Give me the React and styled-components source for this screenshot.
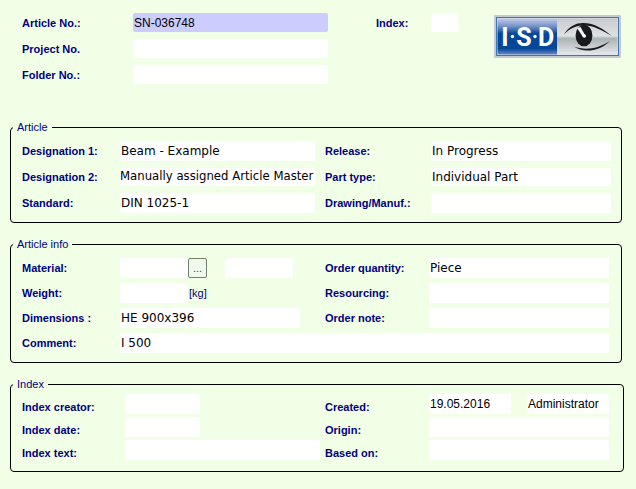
import React from 'react';
import styled, { createGlobalStyle } from 'styled-components';

const colors = {
  page: '#f0ffe6',
  label: '#000080',
  field: '#ffffff',
  key: '#ccccff',
  text: '#000000',
};

const fonts = {
  ui: '"Liberation Sans", Arial, sans-serif',
  value: '"DejaVu Sans", Verdana, sans-serif',
  condensed: '"DejaVu Sans Condensed", "DejaVu Sans", sans-serif',
};

const GlobalStyle = createGlobalStyle`
  *, *::before, *::after {
    box-sizing: border-box;
  }

  body {
    margin: 0;
    background: ${colors.page};
    font-family: ${fonts.ui};
    font-size: 11px;
    line-height: 13px;
    color: ${colors.label};
  }
`;

const Page = styled.form`
  display: flex;
  flex-direction: column;
  gap: 15px;
  padding: 13px 12px 17px 10px;
`;

const Header = styled.header`
  display: flex;
  align-items: flex-start;
  padding: 0 3px 0 12px;
  margin-bottom: 22px;
`;

const HeaderFields = styled.div`
  display: grid;
  grid-template-columns: 111px minmax(0, 195px);
  grid-auto-rows: 19px;
  row-gap: 7px;
  align-items: center;
`;

const IndexField = styled.div`
  display: flex;
  align-items: center;
  gap: 23px;
  height: 19px;
  margin-left: 48px;
`;

const Label = styled.label`
  font-weight: bold;
  white-space: nowrap;
`;

const HeaderLabel = styled(Label)`
  padding-top: 2px;
`;

const SideLabel = styled(Label)`
  padding-left: ${({ $indent }) => $indent || '10px'};
`;

const Input = styled.input`
  width: ${({ $width }) => $width || '100%'};
  min-width: 0;
  height: 100%;
  min-height: 18px;
  padding: 0 0 0 1px;
  border: 0;
  border-radius: 2px;
  background: ${({ $isKey }) => ($isKey ? colors.key : colors.field)};
  color: ${colors.text};
  font-family: ${fonts.value};
  font-size: 12px;

  &:focus {
    outline: 1px solid ${colors.label};
  }
`;

const PlainInput = styled(Input)`
  font-family: ${fonts.ui};
`;

const LongInput = styled(Input)`
  padding: 0 0 3px;
  font-family: ${fonts.condensed};
  font-size: 13px;
`;

const WideInput = styled(Input)`
  grid-column: 2 / -1;
`;

const Group = styled.fieldset`
  display: grid;
  grid-template-columns: ${({ $columns }) => $columns};
  grid-template-rows: ${({ $rows }) => $rows};
  row-gap: ${({ $gap }) => $gap};
  align-items: ${({ $align }) => $align || 'center'};
  min-width: 0;
  margin: ${({ $margin }) => $margin || '0 2px 0 0'};
  padding: ${({ $padding }) => $padding};
  border: 1px solid ${colors.text};
  border-radius: 4px;
`;

const Legend = styled.legend`
  margin-left: -9px;
  padding: 0 4px;
`;

const Cell = styled.div`
  display: flex;
  align-items: center;
  height: 100%;
`;

const SplitCell = styled(Cell)`
  justify-content: space-between;
  gap: 16px;
`;

const BrowseButton = styled.button`
  width: 19px;
  height: 20px;
  margin-right: 18px;
  padding: 0;
  border: 1px solid #70806c;
  border-radius: 2px;
  background: #f0f8ec;
  color: #444444;
  font-family: ${fonts.ui};
  font-size: 11px;
  line-height: 18px;
`;

const Unit = styled.span`
  padding-left: 1px;
`;

const LogoSvg = styled.svg`
  flex: none;
  width: 127px;
  height: 43px;
  margin: 2px 0 0 auto;
`;

const Logo = () => (
  <LogoSvg viewBox="0 0 127 43" role="img" aria-label="ISD">
    <defs>
      <linearGradient id="logoBlue" x1="0" y1="0" x2="0" y2="1">
        <stop offset="0" stopColor="#c3cbe6" />
        <stop offset="0.2" stopColor="#7c97cb" />
        <stop offset="0.42" stopColor="#07479a" />
        <stop offset="0.84" stopColor="#07479a" />
        <stop offset="1" stopColor="#6689c4" />
      </linearGradient>
      <linearGradient id="logoSilver" x1="0" y1="0" x2="0" y2="1">
        <stop offset="0" stopColor="#c8cbce" />
        <stop offset="0.48" stopColor="#dfe1e2" />
        <stop offset="0.56" stopColor="#adb2b5" />
        <stop offset="1" stopColor="#e6e8e9" />
      </linearGradient>
    </defs>
    <rect width="127" height="43" rx="1" fill="#c3cad0" />
    <rect x="2" y="2" width="123" height="39" fill="#3c78b5" />
    <rect x="3" y="3" width="121" height="37" fill="#d4e0ed" />
    <rect x="3.5" y="3.5" width="59.5" height="36" fill="url(#logoBlue)" />
    <rect x="63" y="3.5" width="60.5" height="36" fill="url(#logoSilver)" />
    <g
      fill="#ffffff"
      fontFamily="Roboto, sans-serif"
      fontSize="25"
      fontWeight="bold"
      textAnchor="middle"
    >
      <text x="11" y="31">I</text>
      <text x="30" y="31">S</text>
      <text x="52" y="31">D</text>
    </g>
    <circle cx="18.5" cy="21.5" r="1.7" fill="#ffffff" />
    <circle cx="41" cy="21.5" r="1.7" fill="#ffffff" />
    <path
      d="M69.5 20C75 11 82 8 89 8C101 8 109 14 118 21C108 15.5 100 10.5 90 10.5C82 10.5 76 13 69.5 20Z"
      fill="#17191c"
    />
    <path d="M80 31.5C90 35 102 35 116 26C105 37 89 38 80 31.5Z" fill="#17191c" />
    <ellipse cx="90" cy="20.5" rx="8.4" ry="10.8" fill="#17191c" />
    <path d="M83 13L86.5 12L91 20L89 22Z" fill="#f5f5f5" />
    <circle cx="90.3" cy="21" r="1.8" fill="#ffffff" />
  </LogoSvg>
);

const App = () => (
  <>
    <GlobalStyle />
    <Page>
      <Header>
        <HeaderFields>
          <HeaderLabel htmlFor="articleNo">Article No.:</HeaderLabel>
          <PlainInput id="articleNo" defaultValue="SN-036748" $isKey />
          <HeaderLabel htmlFor="projectNo">Project No.</HeaderLabel>
          <Input id="projectNo" />
          <HeaderLabel htmlFor="folderNo">Folder No.:</HeaderLabel>
          <Input id="folderNo" />
        </HeaderFields>
        <IndexField>
          <HeaderLabel htmlFor="index">Index:</HeaderLabel>
          <Input id="index" $width="27px" />
        </IndexField>
        <Logo />
      </Header>

      <Group
        $columns="98px minmax(0, 195fr) 116px minmax(0, 180fr)"
        $rows="20px 18px 20px"
        $gap="7px"
        $padding="7px 10px 9px 11px"
      >
        <Legend>Article</Legend>
        <Label htmlFor="designation1">Designation 1:</Label>
        <Input id="designation1" defaultValue="Beam - Example" />
        <SideLabel htmlFor="release">Release:</SideLabel>
        <Input id="release" defaultValue="In Progress" />
        <Label htmlFor="designation2">Designation 2:</Label>
        <LongInput id="designation2" defaultValue="Manually assigned Article Master" />
        <SideLabel htmlFor="partType">Part type:</SideLabel>
        <Input id="partType" defaultValue="Individual Part" />
        <Label htmlFor="standard">Standard:</Label>
        <Input id="standard" defaultValue="DIN 1025-1" />
        <SideLabel htmlFor="drawing">Drawing/Manuf.:</SideLabel>
        <Input id="drawing" />
      </Group>

      <Group
        $columns="98px minmax(0, 195fr) 114px minmax(0, 180fr)"
        $rows="repeat(4, 20px)"
        $gap="5px"
        $padding="7px 12px 9px 11px"
      >
        <Legend>Article info</Legend>
        <Label htmlFor="material">Material:</Label>
        <Cell>
          <Input id="material" $width="68px" />
          <BrowseButton type="button" aria-label="Browse material">...</BrowseButton>
          <Input aria-label="Material name" $width="68px" />
        </Cell>
        <SideLabel htmlFor="quantity">Order quantity:</SideLabel>
        <Input id="quantity" defaultValue="Piece" />
        <Label htmlFor="weight">Weight:</Label>
        <Cell>
          <Input id="weight" $width="68px" />
          <Unit>[kg]</Unit>
        </Cell>
        <SideLabel htmlFor="resourcing">Resourcing:</SideLabel>
        <Input id="resourcing" />
        <Label htmlFor="dimensions">Dimensions :</Label>
        <Input id="dimensions" defaultValue="HE 900x396" $width="180px" />
        <SideLabel htmlFor="orderNote">Order note:</SideLabel>
        <Input id="orderNote" />
        <Label htmlFor="comment">Comment:</Label>
        <WideInput id="comment" defaultValue="I 500" />
      </Group>

      <Group
        $columns="103px minmax(0, 195fr) 109px minmax(0, 180fr)"
        $rows="repeat(3, 20px)"
        $gap="3px"
        $align="end"
        $margin="0"
        $padding="3px 14px 11px 11px"
      >
        <Legend>Index</Legend>
        <Label htmlFor="indexCreator">Index creator:</Label>
        <Input id="indexCreator" $width="75px" />
        <SideLabel htmlFor="created" $indent="5px">Created:</SideLabel>
        <SplitCell>
          <PlainInput id="created" defaultValue="19.05.2016" />
          <PlainInput aria-label="Created by" defaultValue="Administrator" />
        </SplitCell>
        <Label htmlFor="indexDate">Index date:</Label>
        <Input id="indexDate" $width="75px" />
        <SideLabel htmlFor="origin" $indent="5px">Origin:</SideLabel>
        <Input id="origin" />
        <Label htmlFor="indexText">Index text:</Label>
        <Input id="indexText" />
        <SideLabel htmlFor="basedOn" $indent="5px">Based on:</SideLabel>
        <Input id="basedOn" />
      </Group>
    </Page>
  </>
);

export default App;
